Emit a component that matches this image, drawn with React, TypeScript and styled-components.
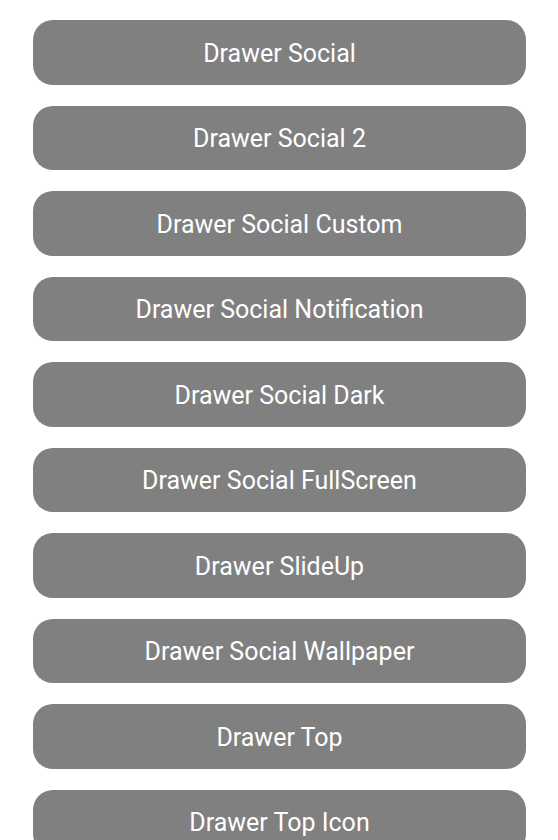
import React from "react";
import styled, { createGlobalStyle } from "styled-components";

const Global = createGlobalStyle`
  html, body { margin: 0; padding: 0; background: #ffffff; }
  body { font-family: Roboto, "Liberation Sans", sans-serif; overflow: hidden; }
`;

const List = styled.div`
  display: flex;
  flex-direction: column;
  gap: 21px;
  padding: 20px 32px 0 33px;
`;

const Button = styled.button`
  height: 64.5px;
  width: 493px;
  border: none;
  border-radius: 20px;
  background: #808080;
  color: #ffffff;
  font-family: Roboto, "Liberation Sans", sans-serif;
  font-size: 25px;
  font-weight: 400;
  display: flex;
  align-items: center;
  justify-content: center;
  padding: 2px 0 0 0;
  cursor: pointer;
  flex-shrink: 0;
`;

const items = [
  "Drawer Social",
  "Drawer Social 2",
  "Drawer Social Custom",
  "Drawer Social Notification",
  "Drawer Social Dark",
  "Drawer Social FullScreen",
  "Drawer SlideUp",
  "Drawer Social Wallpaper",
  "Drawer Top",
  "Drawer Top Icon",
];

export default function App() {
  return (
    <>
      <Global />
      <List>
        {items.map((t) => (
          <Button key={t}>{t}</Button>
        ))}
      </List>
    </>
  );
}
